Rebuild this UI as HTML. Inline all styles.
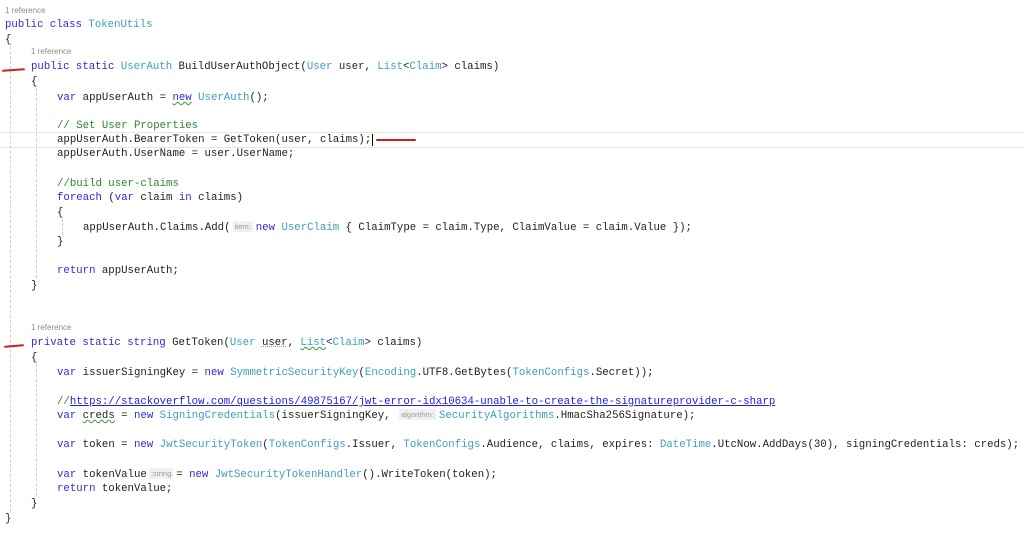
<!DOCTYPE html>
<html><head><meta charset="utf-8"><style>
html,body{margin:0;padding:0;background:#fff;width:1024px;height:536px;overflow:hidden;position:relative}
.l{position:absolute;white-space:pre;font-family:"Liberation Mono",monospace;font-size:10.7px;line-height:14px;height:14px;color:#1e1e1e;padding-top:1px}
.r{position:absolute;font-family:"Liberation Sans",sans-serif;font-size:8px;color:#8a8a8a;line-height:10px}
.k{color:#2c2cd2}.t{color:#3c9fc0}.c{color:#2a8a2a}
.u{color:#2020e0;text-decoration:underline}
.h{display:inline-block;background:#f0f0f0;color:#9a9a9a;font-family:"Liberation Sans",sans-serif;font-size:7.5px;line-height:11px;padding:0 2px;margin:0 3px 0 2px;vertical-align:1px}
.sq{text-decoration:underline wavy #3a9a3a;text-decoration-thickness:1px}
.g{position:absolute;border-left:1px dashed #cfcfcf;width:0}
.red{position:absolute;height:2px;background:#d21c1c;border-radius:1px}
.hl{position:absolute;left:0;width:1024px;top:132px;height:14px;border-top:1px solid #e6e6e6;border-bottom:1px solid #e6e6e6}
</style></head><body>
<div class="hl"></div>
<div class="g" style="left:10px;top:46px;height:466px"></div>
<div class="g" style="left:36px;top:88px;height:190px"></div>
<div class="g" style="left:36px;top:364px;height:132px"></div>
<div class="g" style="left:62px;top:219px;height:16px"></div>

<div class="r" style="left:5px;top:6px">1 reference</div>
<div class="l" style="left:5px;top:17px"><span class="k">public</span> <span class="k">class</span> <span class="t">TokenUtils</span></div>
<div class="l" style="left:5px;top:32px">{</div>
<div class="r" style="left:31px;top:47px">1 reference</div>
<div class="l" style="left:31px;top:59px"><span class="k">public</span> <span class="k">static</span> <span class="t">UserAuth</span> BuildUserAuthObject(<span class="t">User</span> user, <span class="t">List</span>&lt;<span class="t">Claim</span>&gt; claims)</div>
<div class="l" style="left:31px;top:74px">{</div>
<div class="l" style="left:57px;top:90px"><span class="k">var</span> appUserAuth = <span class="k sq">new</span> <span class="t">UserAuth</span>();</div>
<div class="l" style="left:57px;top:118px"><span class="c">// Set User Properties</span></div>
<div class="l" style="left:57px;top:132px">appUserAuth.BearerToken = GetToken(user, claims);<span style="border-left:1px solid #000;margin-left:1px"></span></div>
<div class="l" style="left:57px;top:146px">appUserAuth.UserName = user.UserName;</div>
<div class="l" style="left:57px;top:176px"><span class="c">//build user-claims</span></div>
<div class="l" style="left:57px;top:190px"><span class="k">foreach</span> (<span class="k">var</span> claim <span class="k">in</span> claims)</div>
<div class="l" style="left:57px;top:205px">{</div>
<div class="l" style="left:83px;top:220px">appUserAuth.Claims.Add(<span class="h">item:</span><span class="k">new</span> <span class="t">UserClaim</span> { ClaimType = claim.Type, ClaimValue = claim.Value });</div>
<div class="l" style="left:57px;top:234px">}</div>
<div class="l" style="left:57px;top:263px"><span class="k">return</span> appUserAuth;</div>
<div class="l" style="left:31px;top:278px">}</div>

<div class="r" style="left:31px;top:323px">1 reference</div>
<div class="l" style="left:31px;top:335px"><span class="k">private</span> <span class="k">static</span> <span class="k">string</span> GetToken(<span class="t">User</span> <span style="text-decoration:underline dotted #999">user</span>, <span class="t sq">List</span>&lt;<span class="t">Claim</span>&gt; claims)</div>
<div class="l" style="left:31px;top:350px">{</div>
<div class="l" style="left:57px;top:365px"><span class="k">var</span> issuerSigningKey = <span class="k">new</span> <span class="t">SymmetricSecurityKey</span>(<span class="t">Encoding</span>.UTF8.GetBytes(<span class="t">TokenConfigs</span>.Secret));</div>
<div class="l" style="left:57px;top:394px"><span class="c">//</span><span class="u">https://stackoverflow.com/questions/49875167/jwt-error-idx10634-unable-to-create-the-signatureprovider-c-sharp</span></div>
<div class="l" style="left:57px;top:408px"><span class="k">var</span> <span class="sq">creds</span> = <span class="k">new</span> <span class="t">SigningCredentials</span>(issuerSigningKey, <span class="h">algorithm:</span><span class="t">SecurityAlgorithms</span>.HmacSha256Signature);</div>
<div class="l" style="left:57px;top:437px"><span class="k">var</span> token = <span class="k">new</span> <span class="t">JwtSecurityToken</span>(<span class="t">TokenConfigs</span>.Issuer, <span class="t">TokenConfigs</span>.Audience, claims, expires: <span class="t">DateTime</span>.UtcNow.AddDays(30), signingCredentials: creds);</div>
<div class="l" style="left:57px;top:467px"><span class="k">var</span> tokenValue<span class="h">:string</span>= <span class="k">new</span> <span class="t">JwtSecurityTokenHandler</span>().WriteToken(token);</div>
<div class="l" style="left:57px;top:481px"><span class="k">return</span> tokenValue;</div>
<div class="l" style="left:31px;top:496px">}</div>
<div class="l" style="left:5px;top:511px">}</div>

<div class="red" style="left:2px;top:69px;width:23px;transform:rotate(-4deg)"></div>
<div class="red" style="left:376px;top:139px;width:40px"></div>
<div class="red" style="left:4px;top:345px;width:20px;transform:rotate(-5deg)"></div>
</body></html>
